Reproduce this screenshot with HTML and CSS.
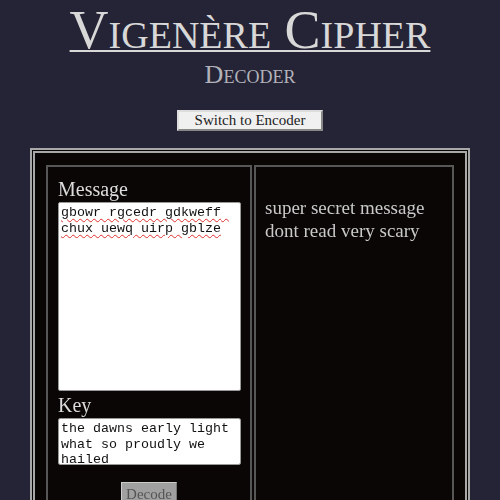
FILE: index.html
```html
<!DOCTYPE html>
<html lang="en">
<head>
    <meta charset="UTF-8">
    <meta name="viewport" content="width=device-width, initial-scale=1.0">
    <title>Vigenère Cipher</title>
    <link rel="stylesheet" href="styles.css">
</head>
<body>
    <h1 class="title">Vigenère Cipher</h1>
    <h2 class="mode">Decoder</h2>
    <button type="button" class="switch-btn">Switch to Encoder</button>

    <div class="frame">
        <div class="cells">
            <div class="cell input-cell">
                <label for="message" class="field-label">Message</label>
                <textarea id="message" class="message-box">gbowr rgcedr gdkweff chux uewq uirp gblze</textarea>
                <label for="key" class="field-label">Key</label>
                <textarea id="key" class="key-box" spellcheck="false">the dawns early light what so proudly we hailed
at the twilights last gleaming</textarea>
                <div class="actions">
                    <button type="button" class="decode-btn">Decode</button>
                </div>
            </div>
            <div class="cell output-cell">
                <p id="output" class="output-text">super secret message dont read very scary</p>
            </div>
        </div>
    </div>
</body>
</html>
```
FILE: styles.css
```css
body {
    margin: 0;
    background-color: #252436;
    font-family: "Liberation Serif", "DejaVu Serif", serif;
    display: flex;
    flex-direction: column;
    align-items: center;
    height: 500px;
    overflow: hidden;
}
.title {
    margin: 0;
    font-size: 54px;
    line-height: 60px;
    font-weight: normal;
    font-variant: small-caps;
    color: #d8d8d8;
    text-decoration: underline;
    text-decoration-thickness: 2px;
    text-underline-offset: 2px;
}
.mode {
    margin: 2px 0 0;
    font-size: 26px;
    line-height: 1;
    font-weight: normal;
    font-variant: small-caps;
    color: #b2b2ba;
}
.switch-btn {
    margin-top: 22px;
    width: 146px;
    height: 23px;
    padding: 0;
    font-family: inherit;
    font-size: 15px;
    color: #222;
    background-color: #f0f0f0;
    border: 2px solid;
    border-color: #ddd #888 #888 #ddd;
}
.frame {
    margin-top: 17px;
    width: 408px;
    padding: 12px 11px;
    border: 5px double #a8a8a8;
    background-color: #0a0605;
}
.cells {
    display: grid;
    grid-template-columns: 206px 200px;
    gap: 2px;
}
.cell {
    border: 2px solid #575757;
    min-height: 340px;
}
.input-cell {
    padding: 11px 10px 10px;
}
.field-label {
    display: block;
    font-size: 20px;
    line-height: 23px;
    color: #dcdcdc;
}
textarea {
    display: block;
    box-sizing: border-box;
    width: 183px;
    margin: 1px 0 0;
    padding: 2px;
    border: 1px solid #999;
    border-radius: 2px;
    background: #fff;
    color: #111;
    font-family: "Liberation Mono", monospace;
    font-size: 13.33px;
    line-height: 15.5px;
    resize: none;
}
.message-box {
    height: 189px;
    margin-bottom: 3px;
    text-decoration: underline wavy #e03030;
    text-decoration-thickness: 1px;
    text-underline-offset: 2px;
}
.key-box {
    height: 47px;
    overflow-y: scroll;
}
.key-box::-webkit-scrollbar {
    width: 6px;
}
.key-box::-webkit-scrollbar-track {
    background: #fff;
}
.key-box::-webkit-scrollbar-thumb {
    background: #c4c4c4;
}
.actions {
    display: flex;
    justify-content: center;
    margin-top: 17px;
}
.decode-btn {
    width: 56px;
    height: 24px;
    padding: 0;
    font-family: inherit;
    font-size: 15px;
    color: #555;
    background-color: #a0a0a0;
    border: 1px solid;
    border-color: #ccc #777 #777 #ccc;
}
.output-cell {
    padding: 29px 9px 10px;
}
.output-text {
    margin: 0;
    font-size: 19px;
    line-height: 23px;
    color: #c9c9c9;
}
```
